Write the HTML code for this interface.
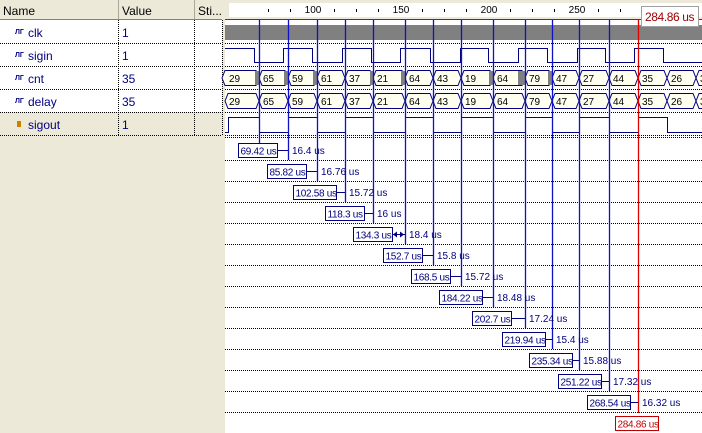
<!DOCTYPE html>
<html><head><meta charset="utf-8"><style>
body{margin:0;width:702px;height:433px;overflow:hidden;background:#fff;font-family:"Liberation Sans",sans-serif}
svg{position:absolute;left:0;top:0}
</style></head><body>
<svg width="702" height="433" xmlns="http://www.w3.org/2000/svg" font-family="Liberation Sans, sans-serif">
<rect x="0" y="0" width="225" height="433" fill="#ece9d8"/>
<rect x="0" y="20" width="222" height="92" fill="#fff"/>
<rect x="0" y="112" width="222" height="23" fill="#ece9d8"/>
<line x1="0" y1="19.5" x2="222" y2="19.5" stroke="#808080"/>
<line x1="118.5" y1="0" x2="118.5" y2="19" stroke="#aca899"/>
<line x1="194.5" y1="0" x2="194.5" y2="19" stroke="#aca899"/>
<text x="3" y="15" font-size="12" fill="#000">Name</text>
<text x="122" y="15" font-size="12" fill="#000">Value</text>
<text x="198" y="15" font-size="12" fill="#000">Sti...</text>
<g stroke="#000" stroke-dasharray="1,1">
<line x1="0" y1="43.5" x2="222" y2="43.5"/><line x1="0" y1="66.5" x2="222" y2="66.5"/>
<line x1="0" y1="89.5" x2="222" y2="89.5"/><line x1="0" y1="112.5" x2="222" y2="112.5"/>
<line x1="0" y1="135.5" x2="222" y2="135.5"/>
<line x1="118.5" y1="20" x2="118.5" y2="135"/><line x1="194.5" y1="20" x2="194.5" y2="135"/>
<line x1="222.5" y1="20" x2="222.5" y2="135"/>
</g>
<g font-size="12" fill="#000080">
<text x="15" y="34" font-size="7" font-weight="bold">ЛГ</text>
<text x="15" y="57" font-size="7" font-weight="bold">ЛГ</text>
<text x="15" y="80" font-size="7" font-weight="bold">ЛГ</text>
<text x="15" y="103" font-size="7" font-weight="bold">ЛГ</text>
<rect x="17" y="121" width="4" height="6" fill="#d08000"/>
<text x="28" y="37">clk</text><text x="28" y="60">sigin</text><text x="28" y="83">cnt</text><text x="28" y="106">delay</text><text x="28" y="129">sigout</text>
<text x="122" y="37">1</text><text x="122" y="60">1</text><text x="122" y="83">35</text><text x="122" y="106">35</text><text x="122" y="129">1</text>
</g>
<rect x="225" y="20" width="477" height="413" fill="#fff"/>
<rect x="225" y="0" width="477" height="20" fill="#ece9d8"/>
<rect x="229" y="3" width="473" height="14" fill="#fff"/>
<line x1="225" y1="19.5" x2="702" y2="19.5" stroke="#404040"/>
<g stroke="#000" stroke-width="1">
<line x1="268.5" y1="9" x2="268.5" y2="12"/><line x1="290.5" y1="9" x2="290.5" y2="12"/><line x1="334.5" y1="9" x2="334.5" y2="12"/><line x1="356.5" y1="9" x2="356.5" y2="12"/><line x1="378.5" y1="9" x2="378.5" y2="12"/><line x1="422.5" y1="9" x2="422.5" y2="12"/><line x1="444.5" y1="9" x2="444.5" y2="12"/><line x1="466.5" y1="9" x2="466.5" y2="12"/><line x1="510.5" y1="9" x2="510.5" y2="12"/><line x1="532.5" y1="9" x2="532.5" y2="12"/><line x1="554.5" y1="9" x2="554.5" y2="12"/><line x1="598.5" y1="9" x2="598.5" y2="12"/><line x1="620.5" y1="9" x2="620.5" y2="12"/>
</g>
<g font-size="10" fill="#000" text-anchor="middle">
<text x="313" y="13">100</text><text x="401" y="13">150</text><text x="489" y="13">200</text><text x="577" y="13">250</text>
</g>
<g stroke="#000" stroke-dasharray="1,1">
<line x1="225" y1="43.5" x2="702" y2="43.5"/><line x1="225" y1="66.5" x2="702" y2="66.5"/>
<line x1="225" y1="89.5" x2="702" y2="89.5"/><line x1="225" y1="112.5" x2="702" y2="112.5"/>
<line x1="225" y1="135.5" x2="702" y2="135.5"/><line x1="225" y1="137.5" x2="702" y2="137.5"/>
<line x1="225" y1="160.5" x2="702" y2="160.5"/><line x1="225" y1="181.5" x2="702" y2="181.5"/>
<line x1="225" y1="202.5" x2="702" y2="202.5"/><line x1="225" y1="223.5" x2="702" y2="223.5"/>
<line x1="225" y1="244.5" x2="702" y2="244.5"/><line x1="225" y1="265.5" x2="702" y2="265.5"/>
<line x1="225" y1="286.5" x2="702" y2="286.5"/><line x1="225" y1="307.5" x2="702" y2="307.5"/>
<line x1="225" y1="328.5" x2="702" y2="328.5"/><line x1="225" y1="349.5" x2="702" y2="349.5"/>
<line x1="225" y1="370.5" x2="702" y2="370.5"/><line x1="225" y1="391.5" x2="702" y2="391.5"/>
<line x1="225" y1="412.5" x2="702" y2="412.5"/>
</g>
<rect x="225" y="25" width="477" height="15" fill="#808080"/>
<path d="M225,48.5 H254.5 V62.5 H283.5 V48.5 H312.5 V62.5 H342.5 V48.5 H371.5 V62.5 H400.5 V48.5 H430.5 V62.5 H460.5 V48.5 H488.5 V62.5 H518.5 V48.5 H547.5 V62.5 H577.5 V48.5 H605.5 V62.5 H634.5 V48.5 H663.5 V62.5 H702" fill="none" stroke="#000080"/>
<path d="M225,132.5 H228.5 V117.5 H259.5 V132.5 H288.5 V117.5 H317.5 V132.5 H345.5 V117.5 H373.5 V132.5 H405.5 V117.5 H433.5 V132.5 H461.5 V117.5 H493.5 V132.5 H525.5 V117.5 H552.5 V132.5 H579.5 V117.5 H609.5 V132.5 H638.5 V117.5 H667.5 V132.5 H702" fill="none" stroke="#000080"/>
<g fill="#fffff0" stroke="#000080">
<path d="M222,78 L225,70.5 H256 L259,78 L256,85.5 H225 Z"/><path d="M259,78 L262,70.5 H285 L288,78 L285,85.5 H262 Z"/><path d="M288,78 L291,70.5 H314 L317,78 L314,85.5 H291 Z"/><path d="M317,78 L320,70.5 H342 L345,78 L342,85.5 H320 Z"/><path d="M345,78 L348,70.5 H370 L373,78 L370,85.5 H348 Z"/><path d="M373,78 L376,70.5 H402 L405,78 L402,85.5 H376 Z"/><path d="M405,78 L408,70.5 H430 L433,78 L430,85.5 H408 Z"/><path d="M433,78 L436,70.5 H458 L461,78 L458,85.5 H436 Z"/><path d="M461,78 L464,70.5 H490 L493,78 L490,85.5 H464 Z"/><path d="M493,78 L496,70.5 H522 L525,78 L522,85.5 H496 Z"/><path d="M525,78 L528,70.5 H549 L552,78 L549,85.5 H528 Z"/><path d="M552,78 L555,70.5 H576 L579,78 L576,85.5 H555 Z"/><path d="M579,78 L582,70.5 H606 L609,78 L606,85.5 H582 Z"/><path d="M609,78 L612,70.5 H635 L638,78 L635,85.5 H612 Z"/><path d="M638,78 L641,70.5 H664 L667,78 L664,85.5 H641 Z"/><path d="M667,78 L670,70.5 H693 L696,78 L693,85.5 H670 Z"/><path d="M696,78 L699,70.5 H710 V85.5 H699 Z"/>
</g>
<g fill="#808080">
<rect x="255" y="71" width="4" height="14"/><rect x="284" y="71" width="4" height="14"/><rect x="313" y="71" width="4" height="14"/><rect x="370" y="71" width="3" height="14"/><rect x="401" y="71" width="4" height="14"/><rect x="489" y="71" width="4" height="14"/><rect x="518" y="71" width="7" height="14"/><rect x="548" y="71" width="4" height="14"/>
</g>
<g fill="#fffff0" stroke="#000080">
<path d="M225,101 L228,93.5 H256 L259,101 L256,108.5 H228 Z"/><path d="M259,101 L262,93.5 H285 L288,101 L285,108.5 H262 Z"/><path d="M288,101 L291,93.5 H314 L317,101 L314,108.5 H291 Z"/><path d="M317,101 L320,93.5 H342 L345,101 L342,108.5 H320 Z"/><path d="M345,101 L348,93.5 H370 L373,101 L370,108.5 H348 Z"/><path d="M373,101 L376,93.5 H402 L405,101 L402,108.5 H376 Z"/><path d="M405,101 L408,93.5 H430 L433,101 L430,108.5 H408 Z"/><path d="M433,101 L436,93.5 H458 L461,101 L458,108.5 H436 Z"/><path d="M461,101 L464,93.5 H490 L493,101 L490,108.5 H464 Z"/><path d="M493,101 L496,93.5 H522 L525,101 L522,108.5 H496 Z"/><path d="M525,101 L528,93.5 H549 L552,101 L549,108.5 H528 Z"/><path d="M552,101 L555,93.5 H576 L579,101 L576,108.5 H555 Z"/><path d="M579,101 L582,93.5 H606 L609,101 L606,108.5 H582 Z"/><path d="M609,101 L612,93.5 H635 L638,101 L635,108.5 H612 Z"/><path d="M638,101 L641,93.5 H664 L667,101 L664,108.5 H641 Z"/><path d="M667,101 L670,93.5 H693 L696,101 L693,108.5 H670 Z"/><path d="M696,101 L699,93.5 H710 V108.5 H699 Z"/>
</g>
<g font-size="10" fill="#000">
<text x="229" y="82">29</text><text x="263" y="82">65</text><text x="292" y="82">59</text><text x="321" y="82">61</text><text x="349" y="82">37</text><text x="377" y="82">21</text><text x="409" y="82">64</text><text x="437" y="82">43</text><text x="465" y="82">19</text><text x="497" y="82">64</text><text x="529" y="82">79</text><text x="556" y="82">47</text><text x="583" y="82">27</text><text x="613" y="82">44</text><text x="642" y="82">35</text><text x="671" y="82">26</text><text x="700" y="82">3</text>
<text x="229" y="105">29</text><text x="263" y="105">65</text><text x="292" y="105">59</text><text x="321" y="105">61</text><text x="349" y="105">37</text><text x="377" y="105">21</text><text x="409" y="105">64</text><text x="437" y="105">43</text><text x="465" y="105">19</text><text x="497" y="105">64</text><text x="529" y="105">79</text><text x="556" y="105">47</text><text x="583" y="105">27</text><text x="613" y="105">44</text><text x="642" y="105">35</text><text x="671" y="105">26</text><text x="700" y="105">3</text>
</g>
<g stroke="#1010c8" stroke-width="1.3">
<line x1="259.5" y1="20" x2="259.5" y2="143"/><line x1="288.5" y1="20" x2="288.5" y2="160"/><line x1="317.5" y1="20" x2="317.5" y2="181"/><line x1="345.5" y1="20" x2="345.5" y2="202"/><line x1="373.5" y1="20" x2="373.5" y2="223"/><line x1="405.5" y1="20" x2="405.5" y2="244"/><line x1="433.5" y1="20" x2="433.5" y2="265"/><line x1="461.5" y1="20" x2="461.5" y2="286"/><line x1="493.5" y1="20" x2="493.5" y2="307"/><line x1="525.5" y1="20" x2="525.5" y2="328"/><line x1="552.5" y1="20" x2="552.5" y2="349"/><line x1="579.5" y1="20" x2="579.5" y2="370"/><line x1="609.5" y1="20" x2="609.5" y2="391"/>
</g>
<line x1="638.5" y1="20" x2="638.5" y2="413" stroke="#e00000" stroke-width="1.3"/>
<g fill="#fff" stroke="#000080">
<rect x="238.5" y="143.5" width="39" height="14"/><rect x="267.5" y="164.5" width="39" height="14"/><rect x="293.5" y="185.5" width="43" height="14"/><rect x="325.5" y="206.5" width="39" height="14"/><rect x="353.5" y="227.5" width="39" height="14"/><rect x="383.5" y="248.5" width="39" height="14"/><rect x="411.5" y="269.5" width="39" height="14"/><rect x="439.5" y="290.5" width="43" height="14"/><rect x="472.5" y="311.5" width="39" height="14"/><rect x="502.5" y="332.5" width="43" height="14"/><rect x="529.5" y="353.5" width="43" height="14"/><rect x="558.5" y="374.5" width="43" height="14"/><rect x="587.5" y="395.5" width="43" height="14"/>
</g>
<rect x="615.5" y="416.5" width="43" height="14" fill="#fff" stroke="#c00000"/>
<g stroke="#000080">
<line x1="277" y1="150.5" x2="288" y2="150.5"/><line x1="306" y1="171.5" x2="317" y2="171.5"/><line x1="336" y1="192.5" x2="345" y2="192.5"/><line x1="364" y1="213.5" x2="373" y2="213.5"/><line x1="392" y1="234.5" x2="405" y2="234.5"/><line x1="422" y1="255.5" x2="433" y2="255.5"/><line x1="450" y1="276.5" x2="461" y2="276.5"/><line x1="482" y1="297.5" x2="493" y2="297.5"/><line x1="511" y1="318.5" x2="525" y2="318.5"/><line x1="545" y1="339.5" x2="552" y2="339.5"/><line x1="572" y1="360.5" x2="579" y2="360.5"/><line x1="601" y1="381.5" x2="609" y2="381.5"/><line x1="630" y1="402.5" x2="638" y2="402.5"/>
</g>
<path d="M393,234.5 L397,231.5 V237.5 Z M404,234.5 L400,231.5 V237.5 Z" fill="#000080"/>
<g font-size="10" fill="#000080" letter-spacing="-0.3">
<text x="240.5" y="154.5">69.42 us</text>
<text x="269.5" y="175.5">85.82 us</text>
<text x="295.5" y="196.5">102.58 us</text>
<text x="327.5" y="217.5">118.3 us</text>
<text x="355.5" y="238.5">134.3 us</text>
<text x="385.5" y="259.5">152.7 us</text>
<text x="413.5" y="280.5">168.5 us</text>
<text x="441.5" y="301.5">184.22 us</text>
<text x="474.5" y="322.5">202.7 us</text>
<text x="504.5" y="343.5">219.94 us</text>
<text x="531.5" y="364.5">235.34 us</text>
<text x="560.5" y="385.5">251.22 us</text>
<text x="589.5" y="406.5">268.54 us</text>
</g>
<g font-size="10" fill="#000080">
<text x="292" y="154">16.4 us</text><text x="321" y="175">16.76 us</text><text x="349" y="196">15.72 us</text><text x="377" y="217">16 us</text><text x="409" y="238">18.4 us</text><text x="437" y="259">15.8 us</text><text x="465" y="280">15.72 us</text><text x="497" y="301">18.48 us</text><text x="529" y="322">17.24 us</text><text x="556" y="343">15.4 us</text><text x="583" y="364">15.88 us</text><text x="613" y="385">17.32 us</text><text x="642" y="406">16.32 us</text>
</g>
<text x="617.5" y="427.5" font-size="10" fill="#c00000" letter-spacing="-0.3">284.86 us</text>
<rect x="641.5" y="6.5" width="57" height="20" fill="#fff" stroke="#a0a0a0"/>
<text x="645" y="21" font-size="12" fill="#a00000" letter-spacing="-0.4">284.86 us</text>
</svg>
</body></html>
